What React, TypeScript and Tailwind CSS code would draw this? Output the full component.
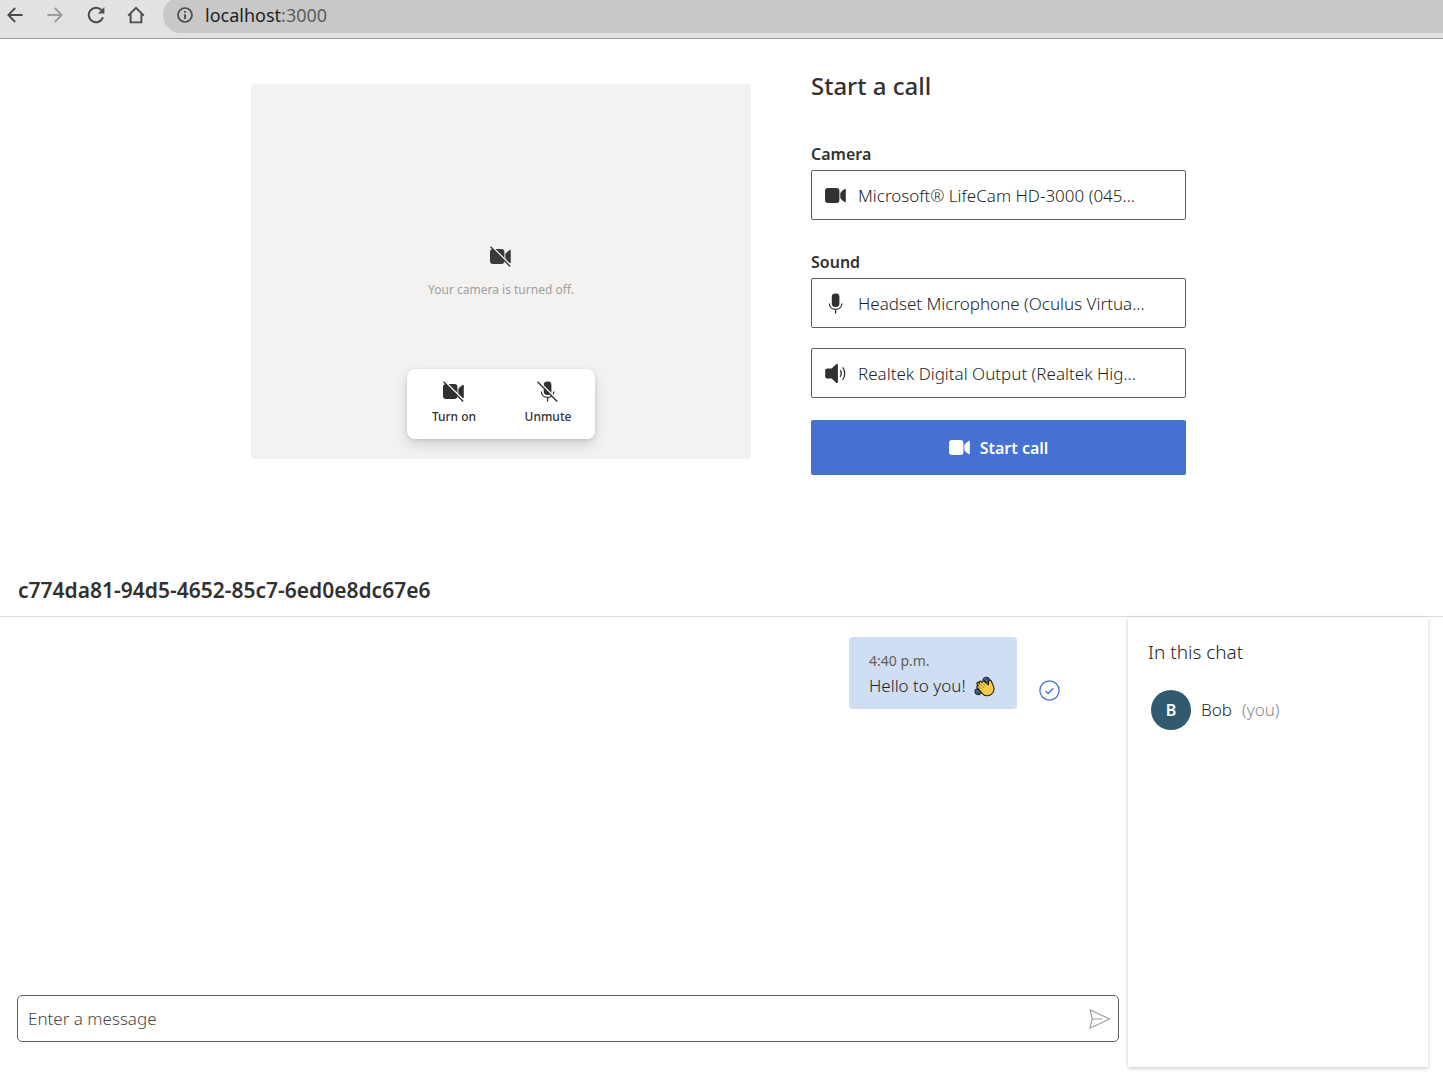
import { useState, type ReactNode } from "react";

function BackIcon() {
  return (
    <svg width="16" height="16" viewBox="0 0 16 16" fill="none" stroke="currentColor" strokeWidth="1.8" aria-hidden="true">
      <path d="M15.6 8H1.3M8.2 1 1.3 8l6.9 7" />
    </svg>
  );
}

function ForwardIcon() {
  return (
    <svg width="16" height="16" viewBox="0 0 16 16" fill="none" stroke="currentColor" strokeWidth="1.8" aria-hidden="true">
      <path d="M.4 8h14.3M7.8 1l6.9 7-6.9 7" />
    </svg>
  );
}

function ReloadIcon() {
  return (
    <svg width="18" height="18" viewBox="0 0 18 18" fill="none" stroke="currentColor" strokeWidth="2" aria-hidden="true">
      <path d="M16 11.2A7.3 7.3 0 1 1 14.4 4" />
      <path d="M17.4 1v6.4H11Z" fill="currentColor" stroke="none" />
    </svg>
  );
}

function HomeIcon() {
  return (
    <svg width="18" height="18" viewBox="0 0 18 18" fill="none" stroke="currentColor" strokeWidth="1.9" aria-hidden="true">
      <path d="M1.2 9.6 9 1.8l7.8 7.8M3.6 8v8.4h10.8V8" />
    </svg>
  );
}

function InfoIcon() {
  return (
    <svg width="16" height="16" viewBox="0 0 16 16" fill="none" stroke="currentColor" aria-hidden="true">
      <circle cx="8" cy="8" r="7" strokeWidth="1.7" />
      <path d="M8 7.2V12M8 4v1.8" strokeWidth="1.8" />
    </svg>
  );
}

function VideoShape() {
  return (
    <>
      <rect x="0" y="3" width="14.4" height="15" rx="3" fill="currentColor" />
      <path d="M15.3 8Q16.6 5.6 19.6 3.9C20.3 3.6 20.8 4 20.8 4.7v11.6c0 .7-.5 1.1-1.2.8Q16.6 15.400 15.3 13Z" fill="currentColor" />
    </>
  );
}

function VideoIcon() {
  return (
    <svg className="shrink-0" width="21" height="21" viewBox="0 0 21 21" aria-hidden="true">
      <VideoShape />
    </svg>
  );
}

function VideoOffIcon({ gap }: { gap: string }) {
  return (
    <svg width="22" height="21" viewBox="0 0 22 21" aria-hidden="true">
      <VideoShape />
      <path d="M0-1.4 22 20.6" className={gap} strokeWidth="1.6" />
      <path d="M.5.7 20.2 20.4" stroke="currentColor" strokeWidth="1.4" />
    </svg>
  );
}

function MicShape() {
  return (
    <>
      <rect x="6.8" y="0.4" width="7.6" height="13.6" rx="3.4" fill="currentColor" />
      <path d="M4.4 10.4c0 3.6 2.7 6 6.2 6s6.2-2.4 6.2-6M10.6 16.4v4" fill="none" stroke="currentColor" strokeWidth="1.3" />
    </>
  );
}

function MicIcon() {
  return (
    <svg className="shrink-0" width="21" height="21" viewBox="0 0 21 21" aria-hidden="true">
      <MicShape />
    </svg>
  );
}

function MicOffIcon() {
  return (
    <svg width="22" height="21" viewBox="0 0 22 21" aria-hidden="true">
      <MicShape />
      <path d="M0-1.4 22 20.6" className="stroke-white" strokeWidth="1.6" />
      <path d="M.5.7 20.2 20.4" stroke="currentColor" strokeWidth="1.4" />
    </svg>
  );
}

function SpeakerIcon() {
  return (
    <svg className="shrink-0" width="21" height="21" viewBox="0 0 21 21" aria-hidden="true">
      <path d="M11.2 1.2c.7-.6 1.7-.2 1.7.7v17.2c0 .9-1 1.3-1.7.7L6.6 15.6H2.2c-1.2 0-2-.8-2-2V7.4c0-1.2.8-2 2-2h4.4Z" fill="currentColor" />
      <path d="M15.2 7.2c1.3 2 1.3 4.6 0 6.6M17.6 4.4c2.9 3.6 2.9 8.600 0 12.2" fill="none" stroke="currentColor" strokeWidth="1.3" />
    </svg>
  );
}

function SentIcon() {
  return (
    <svg width="21" height="21" viewBox="0 0 21 21" fill="none" stroke="#4571d3" strokeWidth="1.3" role="img" aria-label="Message sent">
      <circle cx="10.5" cy="10.5" r="9.6" />
      <path d="m6.4 10.9 2.7 2.6 5.3-5.3" />
    </svg>
  );
}

function SendIcon() {
  return (
    <svg width="22" height="20" viewBox="0 0 22 20" fill="none" stroke="#a19f9d" strokeWidth="1.2" strokeLinejoin="round" aria-hidden="true">
      <path d="M1 .8 20.6 10 1 19.2 3.3 10ZM3.3 10h10.2" />
    </svg>
  );
}

function WaveIcon() {
  return (
    <svg width="21" height="21" viewBox="0 0 21 21" role="img" aria-label="Waving hand">
      <g fill="#4b8299" stroke="#1c2b33" strokeWidth="1.2" strokeLinejoin="round">
        <path d="M9 3.4C10.3.2 15.4.4 16 5.2l-1.500 1.500-4-2Z" />
        <path d="M3.600 12.800C-.4 13 .2 18.800 5.400 18.600l1.600-2Z" />
        <path d="M11 3.200c1.800-.8 3.200.2 3.400 2.400M2.600 14.600c0 1.600 1 2.400 2.600 2.400" fill="none" strokeWidth=".8" />
      </g>
      <path
        d="M3.200 11.600c-1-1.200.2-2.500 1.200-1.800L3.300 8.300c-1-1.300.5-2.600 1.500-1.500l.9.900-.4-.700c-.8-1.400.8-2.500 1.800-1.400l1 .9c-.4-1.300 1-2.100 2-1.200l4.300 3.400.2-2.800c.1-2.200 2.500-2.300 2.900-.3l1.700 4c1.400 3.400.6 6.800-1.900 8.800-2.900 2.200-6.600 1.700-8.700-.5Z"
        fill="#f7cb45"
        stroke="#1a1a1a"
        strokeWidth="1.1"
        strokeLinejoin="round"
      />
      <path d="m4.600 10 4 3.800M5.700 7.700l4.300 4.200M8.100 6.500l3.700 3.600" fill="none" stroke="#7a5c12" strokeWidth=".6" />
    </svg>
  );
}

function DeviceSelect({ icon, label, options }: { icon: ReactNode; label: string; options: string[] }) {
  return (
    <div className="grid h-[50px] items-center text-[#323130]">
      <span className="pointer-events-none z-10 col-start-1 row-start-1 pl-3.5">{icon}</span>
      <select
        aria-label={label}
        className="col-start-1 row-start-1 h-full w-full appearance-none rounded-xs border border-[#605e5c] bg-white pt-0.5 pr-4 pl-[46px] text-[17px] font-light text-[#201f1e]"
      >
        {options.map((option) => (
          <option key={option}>{option}</option>
        ))}
      </select>
    </div>
  );
}

function BrowserBar() {
  return (
    <header className="flex h-[39px] items-end overflow-hidden border-b border-[#9b9b9b] bg-[#e2e2e2] pb-[5px] text-[#4a4a4d]">
      <nav aria-label="Browser" className="flex h-9 shrink-0 items-center gap-[22px] pr-[18px] pl-[7px]">
        <button type="button" aria-label="Back"><BackIcon /></button>
        <button type="button" aria-label="Forward" className="mx-0.5 text-[#9c9c9c]"><ForwardIcon /></button>
        <button type="button" aria-label="Reload"><ReloadIcon /></button>
        <button type="button" aria-label="Home"><HomeIcon /></button>
      </nav>
      <div className="flex h-9 flex-1 items-center gap-3 rounded-l-full bg-[#c8c8c8] pl-3.5 text-[18px]">
        <InfoIcon />
        <a href="#" className="text-[#1f1f1f]">
          localhost<span className="text-[#5c5c5c]">:3000</span>
        </a>
      </div>
    </header>
  );
}

function CallSetup() {
  return (
    <section className="flex justify-center gap-[60px] pt-[27px] pr-1.5">
      <div className="mt-[18px] flex h-[375px] w-[500px] flex-col items-center rounded-sm bg-[#f3f2f1] pb-5 text-[#323130]">
        <div className="flex flex-1 flex-col items-center pt-[162px] text-[#3b3a39]">
          <VideoOffIcon gap="stroke-[#f3f2f1]" />
          <p className="mt-3 text-[12px] leading-[22px] text-[#a19f9d]">Your camera is turned off.</p>
        </div>
        <div className="grid h-[70px] w-[188px] grid-cols-2 rounded-lg bg-white text-[12px] font-medium shadow-[0_6px_14px_rgba(0,0,0,0.13),0_1px_4px_rgba(0,0,0,0.11)]">
          <button type="button" className="flex flex-col items-center gap-1 pt-3 leading-[22px]">
            <VideoOffIcon gap="stroke-white" />
            Turn on
          </button>
          <button type="button" className="flex flex-col items-center gap-1 pt-3 leading-[22px]">
            <MicOffIcon />
            Unmute
          </button>
        </div>
      </div>
      <div className="w-[375px] text-[#323130]">
        <h1 className="text-[24px] leading-10 font-medium">Start a call</h1>
        <h2 className="mt-[34px] mb-0.5 text-[16px] leading-7 font-semibold">Camera</h2>
        <DeviceSelect icon={<VideoIcon />} label="Camera" options={["Microsoft® LifeCam HD-3000 (045..."]} />
        <h2 className="mt-7 mb-0.5 text-[16px] leading-7 font-semibold">Sound</h2>
        <div className="flex flex-col gap-5">
          <DeviceSelect icon={<MicIcon />} label="Microphone" options={["Headset Microphone (Oculus Virtua..."]} />
          <DeviceSelect icon={<SpeakerIcon />} label="Speaker" options={["Realtek Digital Output (Realtek Hig..."]} />
        </div>
        <button
          type="button"
          className="mt-[22px] flex h-[55px] w-full items-center justify-center gap-2.5 rounded-xs bg-[#4571d3] text-[16px] font-semibold text-white"
        >
          <VideoIcon />
          Start call
        </button>
      </div>
    </section>
  );
}

function Chat() {
  const [message, setMessage] = useState("");
  return (
    <section className="mt-[97px] flex flex-1 flex-col text-[#323130]">
      <h2 className="border-b border-[#dcdcdc] px-[18px] pb-2 text-[21px] leading-9 font-semibold">
        c774da81-94d5-4652-85c7-6ed0e8dc67e6
      </h2>
      <div className="flex flex-1 pr-[15px] pb-3.5">
        <div className="flex flex-1 flex-col pr-[9px] pb-[25px] pl-[17px]">
          <div className="flex flex-1 items-start justify-end gap-[22px] pt-5 pr-[59px]">
            <article className="w-[168px] rounded-sm bg-[#cfdef2] px-5 pt-3 pb-2.5">
              <time className="block text-[14px] leading-6 text-[#605e5c]">4:40 p.m.</time>
              <p className="flex items-center gap-2 text-[17px] leading-[26px] font-light whitespace-nowrap text-[#201f1e]">
                Hello to you! <WaveIcon />
              </p>
            </article>
            <div className="pt-[43px]">
              <SentIcon />
            </div>
          </div>
          <form
            className="flex h-[47px] items-center rounded-[5px] border border-[#605e5c] pr-[7px]"
            onSubmit={(event) => {
              event.preventDefault();
              setMessage("");
            }}
          >
            <input
              aria-label="Enter a message"
              placeholder="Enter a message"
              value={message}
              onChange={(event) => setMessage(event.target.value)}
              className="h-full min-w-0 flex-1 px-2.5 text-[17px] font-light outline-none placeholder:text-[#484644]"
            />
            <button type="submit" aria-label="Send message"><SendIcon /></button>
          </form>
        </div>
        <aside className="w-[300px] bg-white px-5 pt-5 shadow-[0_2px_4px_rgba(0,0,0,0.14),0_0_3px_rgba(0,0,0,0.1)]">
          <h3 className="text-[19px] leading-[30px] font-light text-[#201f1e]">In this chat</h3>
          <ul>
            <li className="mt-[23px] flex items-center gap-2.5 pl-[3px] text-[17px] font-light text-[#201f1e]">
              <span className="flex size-10 items-center justify-center rounded-full bg-[#2f5a70] text-[16px] font-semibold text-white">B</span>
              <span>Bob</span>
              <span className="text-[#8a8886]">(you)</span>
            </li>
          </ul>
        </aside>
      </div>
    </section>
  );
}

export default function App() {
  return (
    <div className="flex min-h-screen flex-col bg-white font-['Noto_Sans',sans-serif]">
      <BrowserBar />
      <main className="flex flex-1 flex-col">
        <CallSetup />
        <Chat />
      </main>
    </div>
  );
}
